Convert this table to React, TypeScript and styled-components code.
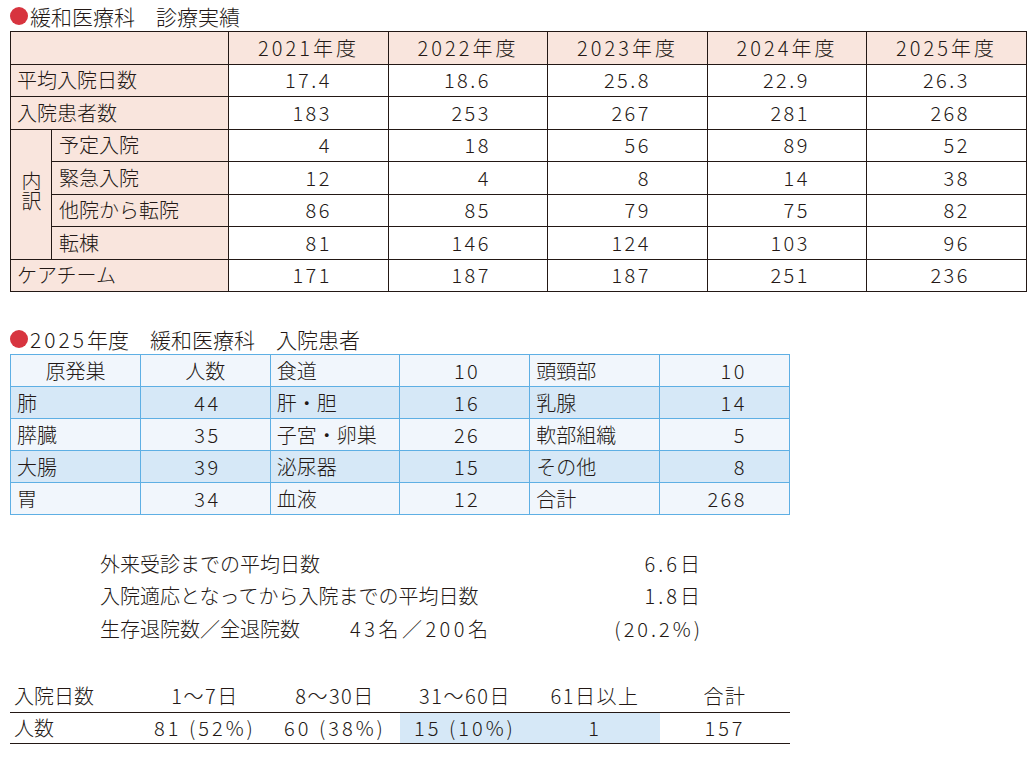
import styled, { createGlobalStyle } from "styled-components";

const GlobalStyle = createGlobalStyle`
    body {
        margin: 0;
        background: #ffffff;
        color: #231815;
        font-family: "Noto Sans CJK JP", "Noto Sans", sans-serif;
        font-weight: 300;
    }
`;

const Page = styled.div`
    width: 1036px;
    padding: 3px 10px 0;
    box-sizing: border-box;
`;

const SectionTitle = styled.h2<{ $gap?: number }>`
    display: flex;
    align-items: center;
    margin: ${p => p.$gap ?? 0}px 0 2px;
    height: 26px;
    font-size: 21px;
    font-weight: 300;
    white-space: pre;
`;

const Digits = styled.span`
    letter-spacing: 3px;
`;

const Dot = styled.span`
    width: 18px;
    height: 18px;
    border-radius: 50%;
    background: #d7343f;
    margin-right: 2px;
    flex-shrink: 0;
`;

const RecordTable = styled.table`
    width: 1016px;
    border-collapse: collapse;
    table-layout: fixed;
    font-size: 20px;
    tr {
        height: 32.5px;
    }
    td, th {
        border: 1px solid #231815;
        padding: 0;
        font-weight: 300;
        line-height: 30px;
    }
`;

const YearHead = styled.th`
    background: #f9e5dd;
    text-align: center;
    letter-spacing: 3px;
`;

const RowHead = styled.td<{ $indent?: number }>`
    background: #f9e5dd;
    padding-left: ${p => p.$indent ?? 6}px !important;
    white-space: nowrap;
`;

const Breakdown = styled.td`
    background: #f9e5dd;
    text-align: center;
    vertical-align: middle;
`;

const VerticalText = styled.span`
    writing-mode: vertical-rl;
    line-height: 22px;
`;

const Num = styled.td<{ $pad?: number }>`
    text-align: right;
    padding-right: ${p => p.$pad ?? 56}px !important;
    letter-spacing: 2.5px;
`;

const SiteTable = styled.table`
    width: 780px;
    border-collapse: collapse;
    table-layout: fixed;
    font-size: 20px;
    td {
        border: 1px solid #5eafe4;
        padding: 0 0 0 6px;
        line-height: 30px;
    }
`;

const SiteRow = styled.tr<{ $shade?: boolean }>`
    height: 32px;
    background: ${p => (p.$shade ? "#d6e8f7" : "#f1f6fc")};
`;

const SiteHead = styled.td`
    text-align: center;
    padding: 0 !important;
`;

const Stats = styled.div`
    margin: 32px 0 0 90px;
    width: 600px;
    font-size: 20px;
`;

const StatRow = styled.div`
    display: flex;
    align-items: center;
    height: 32.5px;
`;

const StatLabel = styled.span<{ $w?: number }>`
    width: ${p => (p.$w ? `${p.$w}px` : "auto")};
    white-space: nowrap;
`;

const StatNums = styled.span`
    letter-spacing: 3.5px;
`;

const StatValue = styled.span`
    margin-left: auto;
    letter-spacing: 3px;
    margin-right: -3px;
`;

const StayTable = styled.table`
    margin-top: 35px;
    width: 780px;
    border-collapse: collapse;
    table-layout: fixed;
    font-size: 20px;
    td {
        padding: 0;
        text-align: center;
        line-height: 30px;
    }
`;

const StayHeadRow = styled.tr`
    height: 33px;
    border-bottom: 1.5px solid #231815;
`;

const StayRow = styled.tr`
    height: 31px;
    border-bottom: 1.5px solid #231815;
`;

const StayLabel = styled.td`
    text-align: left !important;
    padding-left: 4px !important;
`;

const StayCell = styled.td<{ $hl?: boolean; $spacing?: number }>`
    background: ${p => (p.$hl ? "#d6e8f7" : "transparent")};
    white-space: nowrap;
    letter-spacing: ${p => p.$spacing ?? 1.5}px;
`;

const years = ["2021年度", "2022年度", "2023年度", "2024年度", "2025年度"];

const topRows = [
    { label: "平均入院日数", values: ["17.4", "18.6", "25.8", "22.9", "26.3"] },
    { label: "入院患者数", values: ["183", "253", "267", "281", "268"] },
];

const subRows = [
    { label: "予定入院", values: ["4", "18", "56", "89", "52"] },
    { label: "緊急入院", values: ["12", "4", "8", "14", "38"] },
    { label: "他院から転院", values: ["86", "85", "79", "75", "82"] },
    { label: "転棟", values: ["81", "146", "124", "103", "96"] },
];

const careTeam = ["171", "187", "187", "251", "236"];

const sites = [
    [["肺", "44"], ["肝・胆", "16"], ["乳腺", "14"]],
    [["膵臓", "35"], ["子宮・卵巣", "26"], ["軟部組織", "5"]],
    [["大腸", "39"], ["泌尿器", "15"], ["その他", "8"]],
    [["胃", "34"], ["血液", "12"], ["合計", "268"]],
];

const sitePads = [49, 49, 42];

const stayHeads = ["1〜7日", "8〜30日", "31〜60日", "61日以上", "合計"];
const stayValues = ["81 (52%)", "60 (38%)", "15 (10%)", "1", "157"];

function App() {
    return (
        <Page>
            <GlobalStyle />
            <SectionTitle><Dot />緩和医療科　診療実績</SectionTitle>
            <RecordTable>
                <colgroup>
                    <col style={{ width: 41 }} />
                    <col style={{ width: 177 }} />
                    <col style={{ width: 160 }} />
                    <col style={{ width: 159 }} />
                    <col style={{ width: 160 }} />
                    <col style={{ width: 159 }} />
                    <col style={{ width: 160 }} />
                </colgroup>
                <tbody>
                    <tr>
                        <YearHead colSpan={2} />
                        {years.map(y => <YearHead key={y}>{y}</YearHead>)}
                    </tr>
                    {topRows.map(row => (
                        <tr key={row.label}>
                            <RowHead colSpan={2}>{row.label}</RowHead>
                            {row.values.map((v, i) => <Num key={i}>{v}</Num>)}
                        </tr>
                    ))}
                    {subRows.map((row, idx) => (
                        <tr key={row.label}>
                            {idx === 0 && (
                                <Breakdown rowSpan={4}><VerticalText>内訳</VerticalText></Breakdown>
                            )}
                            <RowHead $indent={7}>{row.label}</RowHead>
                            {row.values.map((v, i) => <Num key={i}>{v}</Num>)}
                        </tr>
                    ))}
                    <tr>
                        <RowHead colSpan={2}>ケアチーム</RowHead>
                        {careTeam.map((v, i) => <Num key={i}>{v}</Num>)}
                    </tr>
                </tbody>
            </RecordTable>

            <SectionTitle $gap={34}>
                <Dot /><Digits>2025</Digits>年度　緩和医療科　入院患者
            </SectionTitle>
            <SiteTable>
                <tbody>
                    <SiteRow>
                        <SiteHead>原発巣</SiteHead>
                        <SiteHead>人数</SiteHead>
                        <td>食道</td>
                        <Num $pad={49}>10</Num>
                        <td>頭頸部</td>
                        <Num $pad={42}>10</Num>
                    </SiteRow>
                    {sites.map((row, r) => (
                        <SiteRow key={r} $shade={r % 2 === 0}>
                            {row.map(([name, count], c) => [
                                <td key={`n${c}`}>{name}</td>,
                                <Num key={`c${c}`} $pad={sitePads[c]}>{count}</Num>,
                            ])}
                        </SiteRow>
                    ))}
                </tbody>
            </SiteTable>

            <Stats>
                <StatRow>
                    <StatLabel>外来受診までの平均日数</StatLabel>
                    <StatValue>6.6日</StatValue>
                </StatRow>
                <StatRow>
                    <StatLabel>入院適応となってから入院までの平均日数</StatLabel>
                    <StatValue>1.8日</StatValue>
                </StatRow>
                <StatRow>
                    <StatLabel $w={250}>生存退院数／全退院数</StatLabel>
                    <StatNums>43名／200名</StatNums>
                    <StatValue>(20.2%)</StatValue>
                </StatRow>
            </Stats>

            <StayTable>
                <tbody>
                    <StayHeadRow>
                        <StayLabel>入院日数</StayLabel>
                        {stayHeads.map(h => <StayCell key={h}>{h}</StayCell>)}
                    </StayHeadRow>
                    <StayRow>
                        <StayLabel>人数</StayLabel>
                        {stayValues.map((v, i) => (
                            <StayCell key={i} $hl={i === 2 || i === 3} $spacing={3}>{v}</StayCell>
                        ))}
                    </StayRow>
                </tbody>
            </StayTable>
        </Page>
    );
}

export default App;
